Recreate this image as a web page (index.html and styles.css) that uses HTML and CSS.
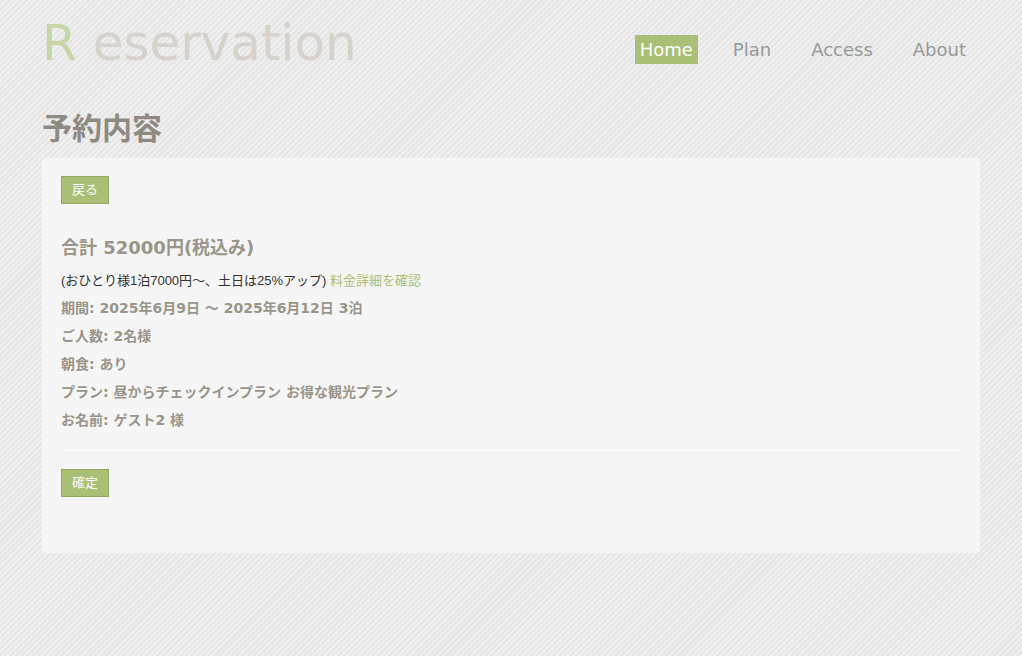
FILE: index.html
```html
<!DOCTYPE html>
<html lang="ja">
<head>
<meta charset="utf-8">
<title>Reservation</title>
<link rel="stylesheet" href="styles.css">
</head>
<body>
<div class="wrap">
  <header class="header">
    <div class="logo"><span class="logo-r">R</span> eservation</div>
    <nav class="nav">
      <a class="nav-link active" href="#">Home</a>
      <a class="nav-link" href="#">Plan</a>
      <a class="nav-link" href="#">Access</a>
      <a class="nav-link" href="#">About</a>
    </nav>
  </header>
  <h1 class="page-title">予約内容</h1>
  <section class="card">
    <button class="btn" type="button">戻る</button>
    <h2 class="total">合計 52000円(税込み)</h2>
    <p class="note">(おひとり様1泊7000円〜、土日は25%アップ) <a class="link" href="#">料金詳細を確認</a></p>
    <ul class="details">
      <li>期間: 2025年6月9日 〜 2025年6月12日 3泊</li>
      <li>ご人数: 2名様</li>
      <li>朝食: あり</li>
      <li>プラン: 昼からチェックインプラン お得な観光プラン</li>
      <li>お名前: ゲスト2 様</li>
    </ul>
    <hr class="divider">
    <button class="btn" type="button">確定</button>
  </section>
</div>
</body>
</html>
```

FILE: styles.css
```css
html, body {
  margin: 0;
  padding: 0;
}
body {
  min-height: 656px;
  background-color: #ebebeb;
  background-image: repeating-linear-gradient(135deg, #efefef 0px, #efefef 2px, #e5e5e5 2px, #e5e5e5 4px);
  font-family: "DejaVu Sans", "Noto Sans CJK JP", sans-serif;
  color: #9a958a;
}
.wrap {
  width: 938px;
  margin: 0 auto;
}
.header {
  display: flex;
  justify-content: space-between;
  align-items: flex-start;
  padding-top: 18px;
}
.logo {
  font-size: 50px;
  line-height: 50px;
  color: #d6d1ca;
}
.logo-r {
  color: #c6d5a6;
}
.nav {
  display: flex;
  gap: 30px;
  margin-top: 17px;
  padding-right: 9px;
}
.nav-link {
  display: block;
  padding: 0 5px;
  font-size: 18px;
  line-height: 29px;
  color: #999999;
  text-decoration: none;
}
.nav-link.active {
  background: #a9bf76;
  color: #ffffff;
}
.page-title {
  margin: 46px 0 14px;
  font-size: 30px;
  line-height: 30px;
  font-weight: bold;
  color: #8e8a82;
}
.card {
  background: #f5f5f5;
  border-radius: 3px;
  padding: 18px 19px 56px;
}
.btn {
  display: block;
  height: 28px;
  padding: 0 10px;
  border: 1px solid #91a862;
  background: #a9bf76;
  color: #ffffff;
  font-family: "Liberation Sans", "Noto Sans CJK JP", sans-serif;
  font-size: 13px;
  line-height: 26px;
  cursor: pointer;
}
.total {
  margin: 30px 0 5px;
  font-size: 18px;
  line-height: 28px;
  font-weight: bold;
  color: #9a958a;
}
.note {
  margin: 0;
  font-family: "Liberation Sans", "Noto Sans CJK JP", sans-serif;
  font-size: 13px;
  line-height: 27px;
  color: #333333;
}
.link {
  color: #a9bf76;
  text-decoration: none;
}
.details {
  list-style: none;
  margin: 0;
  padding: 0;
}
.details li {
  font-size: 14px;
  line-height: 28px;
  font-weight: bold;
  color: #9a958a;
}
.divider {
  margin: 16px 0 18px;
  border: 0;
  border-top: 1px solid #ffffff;
  height: 0;
}
```
